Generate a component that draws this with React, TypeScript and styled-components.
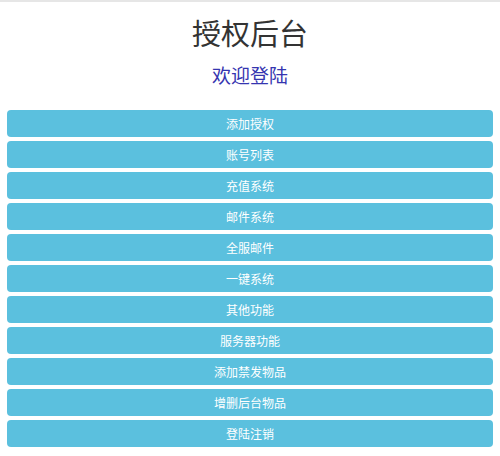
import React from "react";
import styled, { createGlobalStyle } from "styled-components";

const GlobalStyle = createGlobalStyle`
   body {
      margin: 0;
      background: #ffffff;
      font-family: "Noto Sans CJK SC", "Noto Sans", sans-serif;
   }
`;

const menuItems = [
   "添加授权",
   "账号列表",
   "充值系统",
   "邮件系统",
   "全服邮件",
   "一键系统",
   "其他功能",
   "服务器功能",
   "添加禁发物品",
   "增删后台物品",
   "登陆注销",
];

function App() {
   return (
      <Page>
         <GlobalStyle />
         <Header>
            <Title>授权后台</Title>
            <Welcome>欢迎登陆</Welcome>
         </Header>
         <Menu>
            {menuItems.map((item) => (
               <MenuButton key={item} type="button">
                  {item}
               </MenuButton>
            ))}
         </Menu>
      </Page>
   );
}

export default App;

const Page = styled.div`
   width: 500px;
   min-height: 456px;
   border-top: 2px solid #e6e6e6;
   box-sizing: border-box;
`;

const Header = styled.div`
   display: flex;
   flex-direction: column;
   align-items: center;
   padding-top: 14px;
   gap: 15px;
`;

const Title = styled.h1`
   margin: 0;
   font-size: 29px;
   line-height: 33px;
   font-weight: 400;
   color: #333333;
`;

const Welcome = styled.h2`
   margin: 0;
   font-size: 19px;
   line-height: 21px;
   font-weight: 400;
   color: #3535b0;
`;

const Menu = styled.div`
   display: flex;
   flex-direction: column;
   gap: 4px;
   padding: 25px 7px 0 7px;
`;

const MenuButton = styled.button`
   height: 27px;
   border: none;
   border-radius: 4px;
   background: #5bc0de;
   color: #ffffff;
   font-family: "Noto Sans CJK SC", "Noto Sans", sans-serif;
   font-size: 12px;
   line-height: 27px;
   padding: 0;
   cursor: pointer;
`;
